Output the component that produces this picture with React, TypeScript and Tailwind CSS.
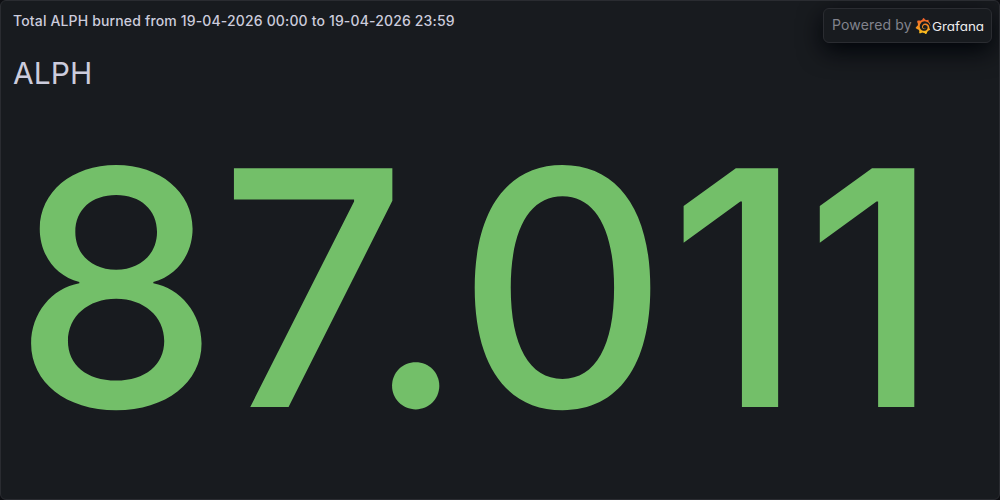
import React from 'react';
import { SiGrafana } from 'react-icons/si';

export default function App() {
  return (
    <div className="h-[500px] w-[1000px] bg-[#0d0e12]">
      <main className="relative flex h-full w-full flex-col overflow-hidden rounded-[6px] border border-[#2a2c31] bg-[#181b1f] font-['Inter',sans-serif]">
        <h1 className="flex h-[38px] shrink-0 items-center px-3 text-[14px] font-medium tracking-[0.15px] text-[#ccccdc]">
          Total ALPH burned from 19-04-2026 00:00 to 19-04-2026 23:59
        </h1>
        <div className="px-3 pt-4 text-[30px] leading-[36px] tracking-[0.1px] text-[#ccccdc]">ALPH</div>
        <div className="px-3 text-[328.1px] leading-[394px] font-medium text-[#73bf69]">87.011</div>
        <a className="absolute top-[7px] right-[7px] flex h-[35px] w-[169px] items-center rounded-[6px] border border-[#2a2c31] bg-[#181b1f] px-2 pb-[2px] text-[14px] tracking-[0.15px] text-[#82838d] shadow-[0_8px_24px_rgb(1,4,9)]">
          <span className="whitespace-nowrap">Powered by</span>
          <svg width="0" height="0" className="absolute" aria-hidden="true">
            <defs>
              <linearGradient id="flame" x1="0" y1="1" x2="0" y2="0">
                <stop offset="0" stopColor="#fbc91e" />
                <stop offset="0.35" stopColor="#f6991f" />
                <stop offset="1" stopColor="#f15b2a" />
              </linearGradient>
            </defs>
          </svg>
          <SiGrafana className="mt-[2px] ml-[3px] h-4 w-4 shrink-0 fill-[url(#flame)]" />
          <span className="mt-[4px] ml-px origin-left scale-x-[1.12] text-[12px] tracking-[0px] text-[#ececee] [font-feature-settings:'cv11','ss03']">Grafana</span>
        </a>
      </main>
    </div>
  );
}
